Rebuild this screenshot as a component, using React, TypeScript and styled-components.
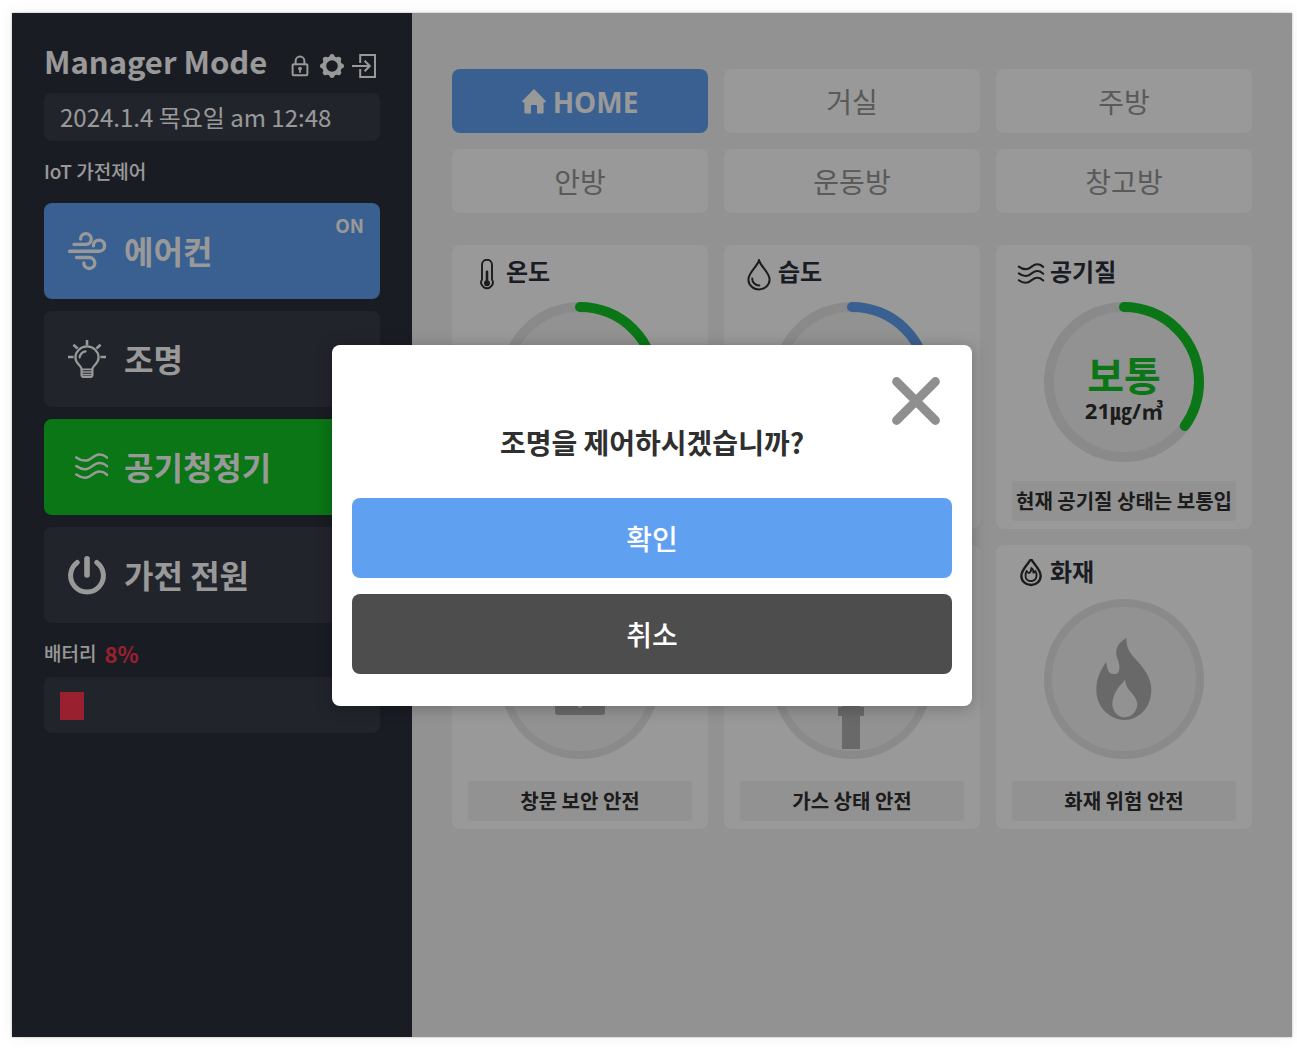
import React, { useState } from "react";
import styled, { createGlobalStyle } from "styled-components";

const color = {
  sidebar: "#2c303c",
  panel: "#373c49",
  canvas: "#f4f4f4",
  card: "#ffffff",
  track: "#e6e6e6",
  well: "#f4f4f4",
  blue: "#5fa1f0",
  green: "#11c525",
  red: "#ff364d",
  ink: "#2f2f2f",
  navy: "#2c2f3b",
  muted: "#969696",
  glyph: "#afafaf",
};

const GlobalStyle = createGlobalStyle`
  *, *::before, *::after { box-sizing: border-box; }
  body {
    margin: 0;
    background: #fff;
    font-family: "Noto Sans CJK KR", sans-serif;
  }
  h1, h2, p { margin: 0; }
  button {
    font-family: inherit;
    border: 0;
    padding: 0;
    cursor: pointer;
  }
`;

const Page = styled.div`
  min-height: 100vh;
  padding: 13px 5px 16px 12px;
  display: flex;
`;

const Shell = styled.div`
  position: relative;
  flex: 1;
  display: flex;
  box-shadow: 0 0 2px rgba(0, 0, 0, 0.3), 0 0 16px rgba(0, 0, 0, 0.06);
`;

const Sidebar = styled.aside`
  flex: 0 0 400px;
  padding: 28px 32px;
  background: ${color.sidebar};
  color: #fff;
`;

const TitleRow = styled.header`
  display: flex;
  align-items: flex-start;
  justify-content: space-between;
  height: 44px;
  margin-bottom: 8px;
`;

const Title = styled.h1`
  font-size: 31px;
  line-height: 40px;
  font-weight: 700;
  white-space: nowrap;
`;

const Tools = styled.div`
  display: flex;
  gap: 8px;
  padding: 13px 4px 0 0;
`;

const ToolButton = styled.button`
  display: flex;
  width: 24px;
  height: 24px;
  background: none;
  color: #fff;
`;

const DateBox = styled.div`
  height: 48px;
  padding: 0 16px;
  border-radius: 8px;
  background: ${color.panel};
  font-size: 24px;
  line-height: 48px;
`;

const SectionLabel = styled.h2<{ $gap: number }>`
  display: flex;
  align-items: center;
  gap: 8px;
  margin: 16px 0 ${(p) => p.$gap}px;
  font-size: 19px;
  line-height: 28px;
  font-weight: 500;
`;

const Percent = styled.span`
  color: ${color.red};
  font-size: 22px;
  font-weight: 700;
`;

const DeviceList = styled.div`
  display: grid;
  gap: 12px;
`;

const DeviceButton = styled.button<{ $bg: string }>`
  position: relative;
  display: flex;
  align-items: center;
  gap: 16px;
  height: 96px;
  padding: 0 24px;
  border-radius: 8px;
  background: ${(p) => p.$bg};
  color: #fff;
  font-size: 32px;
  line-height: 48px;
  font-weight: 700;
`;

const DeviceName = styled.span`
  padding-bottom: 2px;
`;

const OnBadge = styled.span`
  position: absolute;
  top: 12px;
  right: 16px;
  font-size: 19px;
  line-height: 20px;
`;

const BatteryBox = styled.div`
  height: 56px;
  padding: 15px 16px 13px;
  border-radius: 8px;
  background: ${color.panel};
`;

const BatteryLevel = styled.div`
  height: 28px;
  background: ${color.red};
`;

const Main = styled.main`
  flex: 1;
  padding: 56px 40px;
  background: ${color.canvas};
`;

const TabGrid = styled.nav`
  display: grid;
  grid-template-columns: repeat(3, 1fr);
  gap: 16px;
  margin-bottom: 32px;
`;

const Tab = styled.button<{ $active?: boolean }>`
  display: flex;
  align-items: center;
  justify-content: center;
  gap: 7px;
  height: 64px;
  padding-top: 1px;
  border-radius: 8px;
  background: ${(p) => (p.$active ? color.blue : color.card)};
  color: ${(p) => (p.$active ? "#fff" : color.muted)};
  font-family: "Noto Sans", "Noto Sans CJK KR", sans-serif;
  font-size: 28px;
  line-height: 40px;
  font-weight: ${(p) => (p.$active ? 700 : 400)};
`;

const CardGrid = styled.div`
  display: grid;
  grid-template-columns: repeat(3, 1fr);
  grid-auto-rows: 284px;
  gap: 16px;
`;

const Card = styled.section`
  display: flex;
  flex-direction: column;
  align-items: center;
  padding: 14px 16px 8px;
  border-radius: 8px;
  background: ${color.card};
`;

const CardHead = styled.div`
  align-self: stretch;
  display: flex;
  gap: 4px;
  height: 32px;
  padding-left: 4px;
  color: ${color.ink};
`;

const CardTitle = styled.h2`
  color: ${color.navy};
  font-size: 24px;
  line-height: 24px;
  font-weight: 700;
`;

const Dial = styled.div`
  position: relative;
  display: flex;
  flex-direction: column;
  align-items: center;
  justify-content: center;
  gap: 2px;
  width: 160px;
  height: 160px;
  margin-top: 11px;
  padding-top: 14px;
`;

const DialRing = styled.svg`
  position: absolute;
  inset: 0;
`;

const Grade = styled.strong`
  position: relative;
  color: ${color.green};
  font-size: 40px;
  line-height: 40px;
  font-weight: 700;
`;

const Reading = styled.span`
  position: relative;
  color: ${color.ink};
  font-family: "Noto Sans", "Noto Sans CJK KR", sans-serif;
  font-size: 22px;
  line-height: 28px;
  font-weight: 700;
`;

const StateCircle = styled.div`
  display: flex;
  align-items: center;
  justify-content: center;
  width: 160px;
  height: 160px;
  margin-top: 8px;
  border: 8px solid ${color.track};
  border-radius: 50%;
  background: ${color.well};
  color: ${color.glyph};
`;

const StatusLine = styled.p`
  align-self: stretch;
  height: 40px;
  margin-top: auto;
  border-radius: 4px;
  overflow: hidden;
  background: ${color.well};
  color: ${color.ink};
  font-size: 20px;
  line-height: 40px;
  font-weight: 700;
  text-align: center;
  white-space: nowrap;
`;

const Backdrop = styled.div`
  position: absolute;
  inset: 0;
  display: flex;
  align-items: center;
  justify-content: center;
  background: rgba(0, 0, 0, 0.4);
`;

const Dialog = styled.div`
  display: flex;
  flex-direction: column;
  width: 640px;
  padding: 32px 20px;
  border-radius: 8px;
  background: #fff;
  box-shadow: 0 2px 16px rgba(0, 0, 0, 0.25);
`;

const CloseButton = styled.button`
  align-self: flex-end;
  display: flex;
  width: 48px;
  height: 48px;
  margin-right: 12px;
  background: none;
  color: #8f8f8f;
`;

const DialogTitle = styled.h2`
  margin-bottom: 38px;
  color: ${color.ink};
  font-size: 28px;
  line-height: 35px;
  font-weight: 700;
  text-align: center;
`;

const DialogActions = styled.div`
  display: grid;
  gap: 16px;
`;

const ActionButton = styled.button<{ $bg: string }>`
  height: 80px;
  border-radius: 8px;
  background: ${(p) => p.$bg};
  color: #fff;
  font-size: 28px;
  font-weight: 500;
`;

const LockIcon = () => (
  <svg width="24" height="24" viewBox="0 0 24 24" fill="none" stroke="currentColor" strokeWidth="2">
    <rect x="4.6" y="10.2" width="14.8" height="11" rx="1" />
    <path d="M7.6 10V7a4.4 4.4 0 0 1 8.8 0v3" />
    <circle cx="12" cy="14.6" r="1.9" fill="currentColor" stroke="none" />
    <path d="M12 15v3.8" strokeWidth="1.8" />
  </svg>
);

const GearIcon = () => (
  <svg width="24" height="24" viewBox="0 0 24 24" fill="none" stroke="currentColor">
    <circle cx="12" cy="12" r="7.8" strokeWidth="4" />
    {[0, 45, 90, 135, 180, 225, 270, 315].map((a) => (
      <path
        key={a}
        d="M8.8 3.6 L10 1 Q10.500 0 12 0 Q13.500 0 14 1 L15.2 3.6 Z"
        fill="currentColor"
        stroke="none"
        transform={`rotate(${a} 12 12)`}
      />
    ))}
  </svg>
);

const ExitIcon = () => (
  <svg width="24" height="24" viewBox="0 0 24 24" fill="none" stroke="currentColor" strokeWidth="2">
    <path d="M8.2 9V1H23v22H8.2v-8" />
    <path d="M0 12h17.6M12.6 6.8l5.2 5.2-5.2 5.2" />
  </svg>
);

const HomeIcon = () => (
  <svg width="24" height="25" viewBox="0 0 24 25" fill="currentColor">
    <path d="M12 0L24 12.2 23 13.6H21.6V23.6q0 1-1 1H15V17q0-1-1-1h-4q-1 0-1 1v7.6H3.4q-1 0-1-1V13.6H1L0 12.2Z" />
  </svg>
);

const WindIcon = () => (
  <svg width="40" height="40" viewBox="0 -1 40 40" fill="none" stroke="currentColor" strokeWidth="3.4" strokeLinecap="round">
    <path d="M6 12.4H18A5.3 5.4 0 1 0 12.6 7" />
    <path d="M1.5 19.3H31A5.6 5.6 0 1 0 25.4 13.7" />
    <path d="M8.5 25.5H21.3A5.5 5.5 0 1 1 15.8 31" />
  </svg>
);

const BulbIcon = () => (
  <svg width="40" height="40" viewBox="0 -1 40 40" fill="none" stroke="currentColor" strokeWidth="2.2" strokeLinecap="round" strokeLinejoin="round">
    <path d="M13.6 29.4C13.6 25.6 7.4 24 7.4 17.6a11.6 11.2 0 0 1 23.2 0C30.6 24 24.4 25.6 24.4 29.4V35.6a1.4 1.4 0 0 1-1.4 1.2h-8a1.4 1.4 0 0 1-1.4-1.2Z" />
    <path d="M13.6 29.4h10.8M14.6 32h8.8M14.6 34.5h8.8" strokeWidth="1.7" />
    <path d="M11.6 17.4a7.4 7.4 0 0 1 6-6" />
    <path d="M19 0v5.2M0 17h5.6M32.4 17h5.6M5.4 4.8l4.2 3.7M32.6 4.8l-4.2 3.7" strokeWidth="2.6" strokeLinecap="butt" />
  </svg>
);

const wave = "C5 7.2 8 8 12 7.4S19 1.6 24 1.4S30 2.8 32.3 4.8";

const PurifierIcon = () => (
  <svg width="40" height="40" viewBox="-7 -6 40 40" fill="none" stroke="currentColor" strokeWidth="2.5" strokeLinecap="round">
    {[0, 8.6, 17.2].map((y) => (
      <path key={y} d={`M1.3 4.4${wave}`} transform={`translate(0 ${y})`} />
    ))}
  </svg>
);

const PowerIcon = () => (
  <svg width="40" height="40" viewBox="0 -1 40 40" fill="none" stroke="currentColor" strokeWidth="5" strokeLinecap="round">
    <path d="M9.2 8.2A16.4 16.4 0 1 0 28.8 8.2" transform="translate(0 -1.8)" />
    <path d="M19 2.8v16.2" strokeWidth="5.6" />
  </svg>
);

const ThermoIcon = () => (
  <svg width="30" height="32" viewBox="0 0 30 32" fill="none" stroke="currentColor" strokeWidth="1.9" strokeLinecap="round">
    <path d="M10 20.4V5.8a5 5 0 0 1 10 0v14.6a5.8 5.8 0 1 1-10 0Z" />
    <path d="M15 12.8v11" strokeWidth="2.6" />
    <circle cx="15" cy="24.2" r="3" fill="currentColor" stroke="none" />
  </svg>
);

const DropIcon = () => (
  <svg width="30" height="32" viewBox="0 0 30 32" fill="none" stroke="currentColor" strokeWidth="2" strokeLinecap="round">
    <path d="M15 1.4C13 8 4.4 13.6 4.4 20.4a10.6 10 0 0 0 21.2 0C25.6 13.6 17 8 15 1.4Z" />
    <path d="M8.2 19.4a7 7 0 0 0 7.2 7" />
  </svg>
);

const AirIcon = () => (
  <svg width="30" height="32" viewBox="-2.2 -5 38 40" fill="none" stroke="currentColor" strokeWidth="2.6" strokeLinecap="round">
    {[0, 8.6, 17.2].map((y) => (
      <path key={y} d={`M1.3 4.4${wave}`} transform={`translate(0 ${y})`} />
    ))}
  </svg>
);

const FireIcon = () => (
  <svg width="30" height="32" viewBox="-13 4 90 96" fill="none" stroke="currentColor" strokeWidth="7" strokeLinejoin="round">
    <path d="M32 3C26 18 3 34 3 55a29 27 0 0 0 58 0C61 34 38 18 32 3Z" />
    <path d="M19 40C12 52 14 70 32 70S52 50 45 40C43 44 41 45 39 45C40 38 37 33 33 31C33 40 30 44 26 46C22 46 20 44 19 40Z" strokeWidth="5.5" />
  </svg>
);

const PadlockGlyph = () => (
  <svg width="50" height="72" viewBox="0 0 50 72" fill="none" stroke="currentColor">
    <path d="M10 30V18a15 15 0 0 1 30 0v12" strokeWidth="6" />
    <path fillRule="evenodd" fill="currentColor" stroke="none" d="M3 28H47q3 0 3 3V69q0 3-3 3H3q-3 0-3-3V31q0-3 3-3ZM25 43a5 5 0 0 0-2.4 9.4V62.500a2.4 2.4 0 0 0 4.8 0V52.4A5 5 0 0 0 25 43Z" />
  </svg>
);

const ValveGlyph = () => (
  <svg width="88" height="142" viewBox="0 0 88 142" fill="currentColor">
    <path d="M16 38H72V50H16ZM36 50H52V70H36ZM30 70H58V90H30Z" />
    <path d="M30 99H56V107q0 1-1 1H31q-1 0-1-1ZM34 108H52V141H34ZM34 88H52V99H34Z" />
  </svg>
);

const FlameGlyph = () => (
  <svg width="56" height="82" viewBox="0 0 166 246" fill="currentColor">
    <path
      fillRule="evenodd"
      d="M90 0C60 18 56 38 62 58C67 74 70 82 69 92C68 104 62 108 52 108C36 108 34 96 29 72C12 98 0 122 0 156C0 210 44 246 84 246C128 246 165 208 165 156C165 120 144 92 122 68C104 48 90 36 90 0ZM86 125C88 160 120 166 123 198C122 222 104 238 85 238C68 238 50 224 48 200C48 164 70 144 86 125Z"
    />
  </svg>
);

const CloseIcon = () => (
  <svg width="48" height="48" viewBox="0 0 48 48" fill="none" stroke="currentColor" strokeWidth="9" strokeLinecap="round">
    <path d="M4.6 4.6L43.4 43.4M43.4 4.6L4.6 43.4" />
  </svg>
);

type GaugeProps = { ratio: number; stroke: string; children?: React.ReactNode };

const Gauge = ({ ratio, stroke, children }: GaugeProps) => (
  <Dial>
    <DialRing width="160" height="160" viewBox="0 0 160 160" fill="none" strokeWidth="10">
      <circle cx="80" cy="80" r="75" fill={color.well} stroke={color.track} />
      <circle
        cx="80"
        cy="80"
        r="75"
        stroke={stroke}
        strokeLinecap="round"
        pathLength="100"
        strokeDasharray={`${ratio} 100`}
        transform="rotate(-90 80 80)"
      />
    </DialRing>
    {children}
  </Dial>
);

const devices = [
  { name: "에어컨", icon: <WindIcon />, bg: color.blue, on: true },
  { name: "조명", icon: <BulbIcon />, bg: color.panel },
  { name: "공기청정기", icon: <PurifierIcon />, bg: color.green },
  { name: "가전 전원", icon: <PowerIcon />, bg: color.panel },
];

const rooms = ["거실", "주방", "안방", "운동방", "창고방"];

export default function App() {
  const [open, setOpen] = useState(true);
  const battery = 8;
  const close = () => setOpen(false);

  return (
    <>
      <GlobalStyle />
      <Page>
        <Shell>
          <Sidebar>
            <TitleRow>
              <Title>Manager Mode</Title>
              <Tools>
                <ToolButton type="button"><LockIcon /></ToolButton>
                <ToolButton type="button"><GearIcon /></ToolButton>
                <ToolButton type="button"><ExitIcon /></ToolButton>
              </Tools>
            </TitleRow>
            <DateBox>2024.1.4 목요일 am 12:48</DateBox>
            <SectionLabel $gap={18}>IoT 가전제어</SectionLabel>
            <DeviceList>
              {devices.map((d) => (
                <DeviceButton key={d.name} type="button" $bg={d.bg}>
                  {d.icon}
                  <DeviceName>{d.name}</DeviceName>
                  {d.on && <OnBadge>ON</OnBadge>}
                </DeviceButton>
              ))}
            </DeviceList>
            <SectionLabel $gap={10}>
              배터리 <Percent>{battery}%</Percent>
            </SectionLabel>
            <BatteryBox>
              <BatteryLevel style={{ width: `${battery}%` }} />
            </BatteryBox>
          </Sidebar>

          <Main>
            <TabGrid>
              <Tab type="button" $active>
                <HomeIcon />
                HOME
              </Tab>
              {rooms.map((room) => (
                <Tab key={room} type="button">{room}</Tab>
              ))}
            </TabGrid>

            <CardGrid>
              <Card>
                <CardHead>
                  <ThermoIcon />
                  <CardTitle>온도</CardTitle>
                </CardHead>
                <Gauge ratio={35} stroke={color.green} />
              </Card>
              <Card>
                <CardHead>
                  <DropIcon />
                  <CardTitle>습도</CardTitle>
                </CardHead>
                <Gauge ratio={35} stroke={color.blue} />
              </Card>
              <Card>
                <CardHead>
                  <AirIcon />
                  <CardTitle>공기질</CardTitle>
                </CardHead>
                <Gauge ratio={35} stroke={color.green}>
                  <Grade>보통</Grade>
                  <Reading>21㎍/㎥</Reading>
                </Gauge>
                <StatusLine>현재 공기질 상태는 보통입</StatusLine>
              </Card>
              <Card>
                <CardHead />
                <StateCircle><PadlockGlyph /></StateCircle>
                <StatusLine>창문 보안 안전</StatusLine>
              </Card>
              <Card>
                <CardHead />
                <StateCircle><ValveGlyph /></StateCircle>
                <StatusLine>가스 상태 안전</StatusLine>
              </Card>
              <Card>
                <CardHead>
                  <FireIcon />
                  <CardTitle>화재</CardTitle>
                </CardHead>
                <StateCircle><FlameGlyph /></StateCircle>
                <StatusLine>화재 위험 안전</StatusLine>
              </Card>
            </CardGrid>
          </Main>

          {open && (
            <Backdrop>
              <Dialog role="dialog" aria-modal="true" aria-labelledby="dialog-title">
                <CloseButton type="button" onClick={close}><CloseIcon /></CloseButton>
                <DialogTitle id="dialog-title">조명을 제어하시겠습니까?</DialogTitle>
                <DialogActions>
                  <ActionButton type="button" $bg={color.blue} onClick={close}>확인</ActionButton>
                  <ActionButton type="button" $bg="#4d4d4d" onClick={close}>취소</ActionButton>
                </DialogActions>
              </Dialog>
            </Backdrop>
          )}
        </Shell>
      </Page>
    </>
  );
}
